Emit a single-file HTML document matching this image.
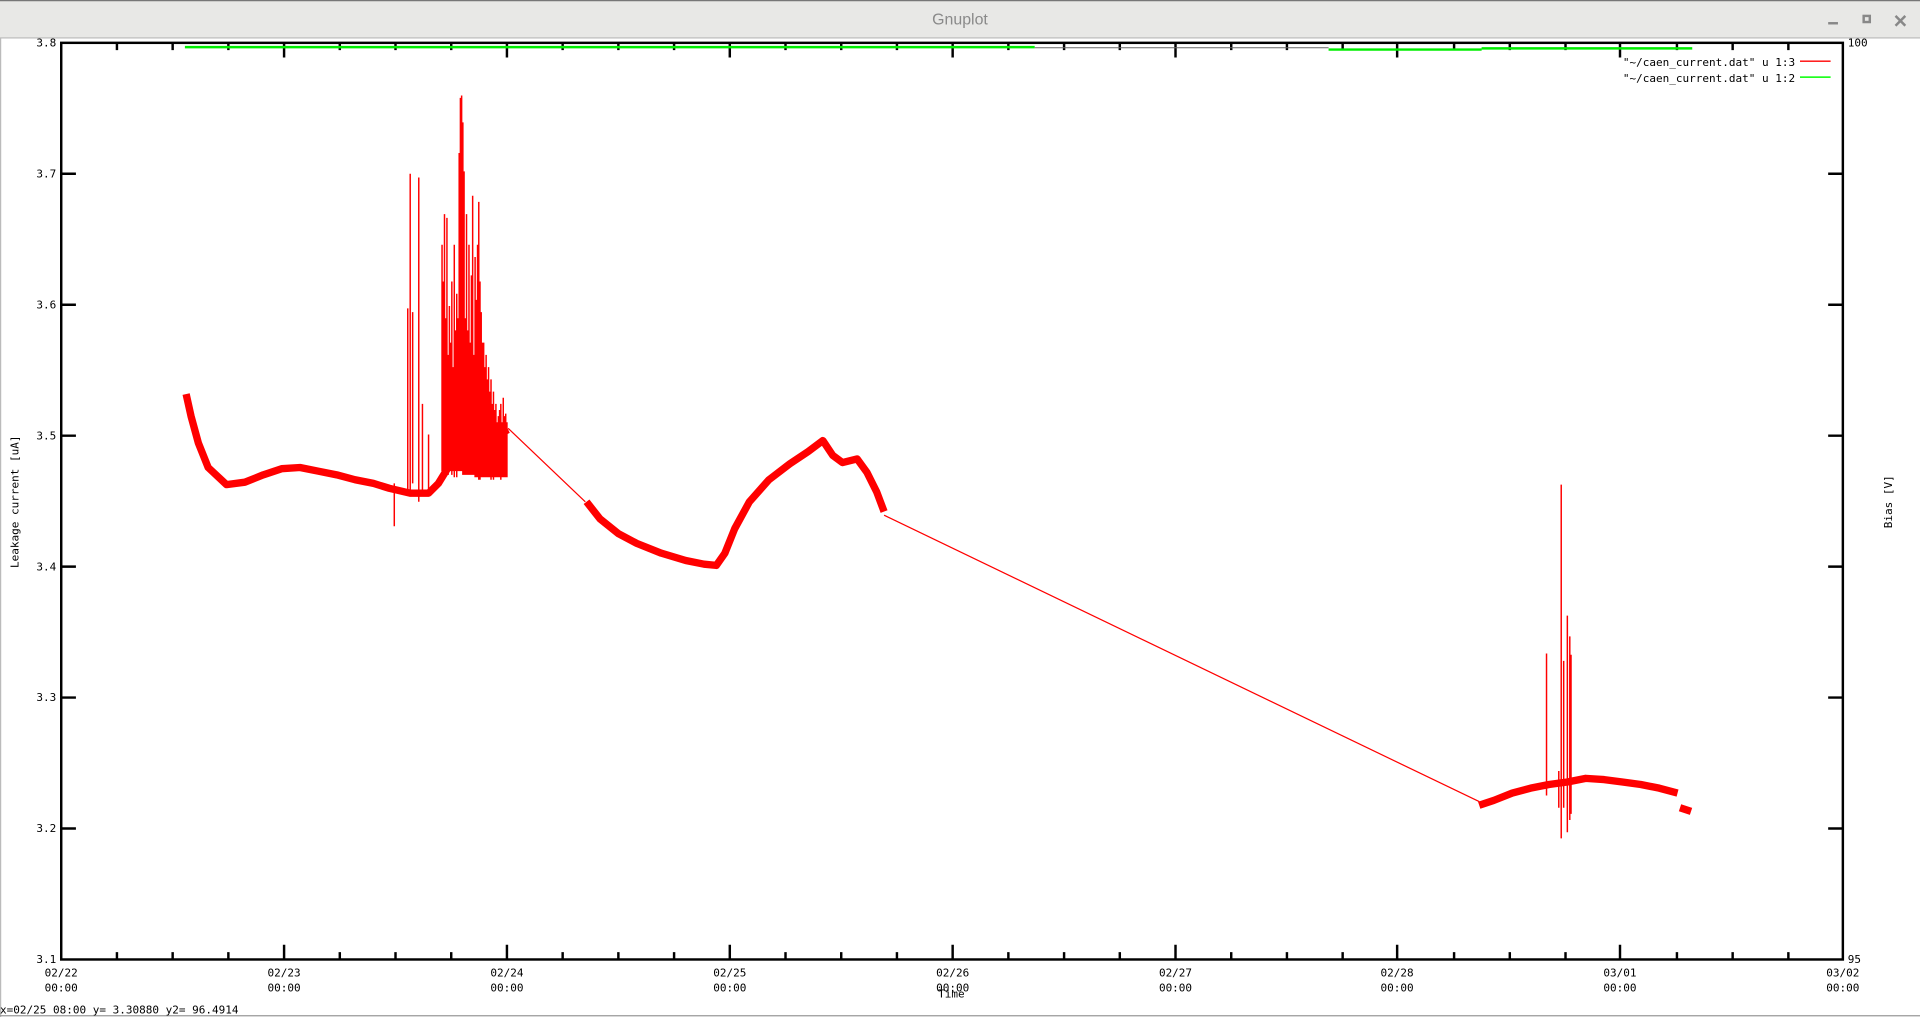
<!DOCTYPE html>
<html><head><style>
html,body{margin:0;padding:0;width:1920px;height:1017px;overflow:hidden;background:#fff}
svg{display:block}
text{font-family:"DejaVu Sans Mono","Liberation Mono",monospace;font-size:9px;fill:#000}
</style></head><body>
<svg width="1920" height="1017" viewBox="0 0 1568 831" preserveAspectRatio="none">
<rect x="0" y="0" width="1568" height="31" fill="#e8e8e6"/>
<line x1="0" y1="31" x2="1568" y2="31" stroke="#b8b8b8" stroke-width="1"/>
<line x1="0" y1="0.5" x2="1568" y2="0.5" stroke="#777" stroke-width="1"/>
<text x="784" y="20" text-anchor="middle" style="font-family:'Liberation Sans',sans-serif;font-size:13px;fill:#8a8a8a">Gnuplot</text>
<line x1="1493" y1="19" x2="1501" y2="19" stroke="#888" stroke-width="2"/>
<rect x="1522" y="13" width="5" height="5" fill="none" stroke="#888" stroke-width="2"/>
<path d="M1548 13 L1556 21 M1556 13 L1548 21" stroke="#888" stroke-width="2"/>
<line x1="0.5" y1="31" x2="0.5" y2="831" stroke="#bbb"/>
<line x1="0" y1="830" x2="1568" y2="830" stroke="#999"/>

<rect x="50" y="35" width="1455" height="749" fill="none" stroke="#000" stroke-width="2"/>
<g stroke="#000" stroke-width="2">
<path d="M232 784v-12M414 784v-12M596 784v-12M778 784v-12M960 784v-12M1141 784v-12M1323 784v-12
M232 35v12M414 35v12M596 35v12M778 35v12M960 35v12M1141 35v12M1323 35v12"/>
<path d="M95.5 784v-6M141 784v-6M186.5 784v-6M277.5 784v-6M323 784v-6M368.5 784v-6M459.5 784v-6M505 784v-6M550.5 784v-6M641.5 784v-6M687 784v-6M732.5 784v-6M823.5 784v-6M869 784v-6M914.5 784v-6M1005.5 784v-6M1051 784v-6M1096.5 784v-6M1187.5 784v-6M1233 784v-6M1278.5 784v-6M1369.5 784v-6M1415 784v-6M1460.5 784v-6
M95.5 35v6M141 35v6M186.5 35v6M277.5 35v6M323 35v6M368.5 35v6M459.5 35v6M505 35v6M550.5 35v6M641.5 35v6M687 35v6M732.5 35v6M823.5 35v6M869 35v6M914.5 35v6M1005.5 35v6M1051 35v6M1096.5 35v6M1187.5 35v6M1233 35v6M1278.5 35v6M1369.5 35v6M1415 35v6M1460.5 35v6"/>
<path d="M50 142h12M50 249h12M50 356h12M50 463h12M50 570h12M50 677h12
M1505 142h-12M1505 249h-12M1505 356h-12M1505 463h-12M1505 570h-12M1505 677h-12"/>
</g>
<g text-anchor="end">
<text x="46" y="38">3.8</text><text x="46" y="145">3.7</text><text x="46" y="252">3.6</text>
<text x="46" y="359">3.5</text><text x="46" y="466">3.4</text><text x="46" y="573">3.3</text>
<text x="46" y="680">3.2</text><text x="46" y="787">3.1</text>
</g>
<text x="1509" y="38">100</text><text x="1509" y="787">95</text>
<g text-anchor="middle">
<text x="50" y="798">02/22</text><text x="50" y="810">00:00</text>
<text x="232" y="798">02/23</text><text x="232" y="810">00:00</text>
<text x="414" y="798">02/24</text><text x="414" y="810">00:00</text>
<text x="596" y="798">02/25</text><text x="596" y="810">00:00</text>
<text x="778" y="798">02/26</text><text x="778" y="810">00:00</text>
<text x="960" y="798">02/27</text><text x="960" y="810">00:00</text>
<text x="1141" y="798">02/28</text><text x="1141" y="810">00:00</text>
<text x="1323" y="798">03/01</text><text x="1323" y="810">00:00</text>
<text x="1505" y="798">03/02</text><text x="1505" y="810">00:00</text>
<text x="777" y="815">Time</text>
</g>
<text x="15" y="410" text-anchor="middle" transform="rotate(-90 15 410)">Leakage current [uA]</text>
<text x="1545" y="410" text-anchor="middle" transform="rotate(-90 1545 410)">Bias [V]</text>
<text x="0" y="828">x=02/25 08:00 y= 3.30880 y2= 96.4914</text>

<text x="1466" y="54" text-anchor="end">"~/caen_current.dat" u 1:3</text>
<line x1="1470" y1="50" x2="1495" y2="50" stroke="#f00" stroke-width="1.2"/>
<text x="1466" y="67" text-anchor="end">"~/caen_current.dat" u 1:2</text>
<line x1="1470" y1="63" x2="1495" y2="63" stroke="#0f0" stroke-width="1.2"/>

<path d="M151 38.5H845" stroke="#0e0" stroke-width="2"/>
<path d="M845 39H1085" stroke="#666" stroke-width="0.8"/>
<path d="M1085 40.5H1210M1210 39.5H1382" stroke="#0e0" stroke-width="2"/>

<g fill="none" stroke="#f00" stroke-linejoin="round">
<polyline stroke-width="6" points="152,322 156,340 162,362 170,382 185,396 200,394 215,388 230,383 245,382 260,385 275,388 290,392 305,395 318,399 335,403 350,403 358,395 366,382 378,373 395,362 405,356 415,351"/>
<polyline stroke-width="1" points="415,350 478,410"/>
<polyline stroke-width="6" points="479,410 490,424 505,436 520,444 540,452 560,458 575,461 585,462 592,452 600,432 612,410 628,392 645,379 660,369 672,360 680,372 688,378 700,375 708,386 716,402 722,418"/>
<polyline stroke-width="1" points="722,421 1208,655"/>
<polyline stroke-width="6" points="1208,658 1220,654 1235,648 1250,644 1265,641 1280,639 1295,636 1310,637 1325,639 1340,641 1355,644 1370,648"/>
<polyline stroke-width="6" points="1372,660 1381,663"/>
</g>
<g stroke="#f00" stroke-width="1.2">
<path d="M322 430V395M333 400V252M335 400V142M337 395V255M342 410V145M345 405V330M350 400V355
M361 385V200M362 385V230M363 385V175M364 385V260M365 388V178M366 388V290M367 385V250M368 385V280M369 388V230M370 385V300M371 390V200M372 385V270M373 390V240M374 385V260M375 385V125M376 385V80M377 385V78M378 388V100M379 388V140M380 388V260M381 388V175M382 388V270M383 388V200M384 388V280M385 388V225M386 388V160M387 388V290M388 390V210M389 390V245M390 390V200M391 392V165M392 392V230M393 390V255M394 390V280M395 390V280M396 390V300M397 390V290M398 390V310M399 390V300M400 390V320M401 392V310M402 390V330M403 392V320M404 390V335M405 390V330M406 390V345M407 390V340M408 390V335M409 392V330M410 390V345M411 390V325M412 390V340M413 390V338M414 390V345"/>
<path d="M1263 650V534M1273 660V630M1275 685V396M1277 660V540M1280 680V503M1282 670V520M1283 665V535"/>
</g>
</svg>
</body></html>
